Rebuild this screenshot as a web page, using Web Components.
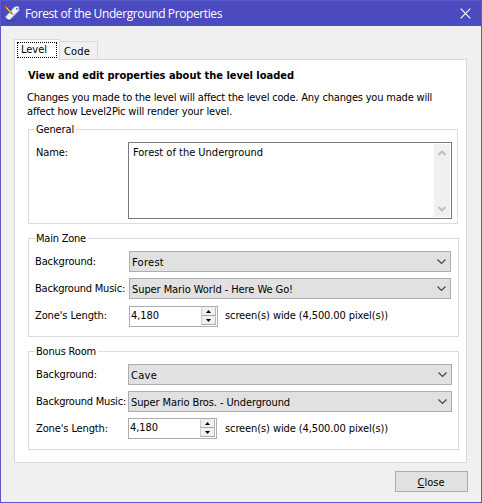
<!DOCTYPE html>
<html lang="en">
<head>
<meta charset="utf-8">
<title>Forest of the Underground Properties</title>
<style>
html, body { margin: 0; width: 482px; height: 503px; overflow: hidden; }
body { font: 11px/14px "DejaVu Sans Condensed", "DejaVu Sans", sans-serif; font-stretch: condensed; color: #000; }
</style>
</head>
<body>
<props-window></props-window>
<script>
const define = (name, html, setup) => customElements.define(name, class extends HTMLElement {
  connectedCallback() {
    if (this.shadowRoot) return;
    this.attachShadow({ mode: 'open' }).innerHTML = html;
    if (setup) setup(this, this.shadowRoot);
  }
});

/* Text whose tracking is adjusted so that it spans a given width. */
define('fit-text', `<style>:host{display:block;white-space:pre;flex:none}span{display:inline-block}</style><span><slot></slot></span>`, (el, root) => {
  const target = +el.getAttribute('w');
  const span = root.querySelector('span');
  const n = el.textContent.length;
  span.style.letterSpacing = ((target - span.getBoundingClientRect().width) / n) + 'px';
  el.style.width = target + 'px';
});

define('title-bar', `<style>
:host{display:flex;height:25px;box-sizing:border-box;background:#4b4abe;color:#fff;font:12px/25px "Open Sans","Noto Sans",sans-serif;padding-left:3px}
.app{margin:4px 5px 0 0;width:16px;height:16px}
.x{margin:7px 10px 0 auto;width:11px;height:11px}
</style>
<svg class="app" viewBox="0 0 16 16"><path d="M3 15.500H10L12 14" stroke="#34349a" fill="none"/><path d="M1.500 12L10.500 2 14.500 1.500 15 5.500 6 14.500 4 14.500Z" fill="#e9f2f4" stroke="#a9cbd8" stroke-width=".6"/><circle cx="12.800" cy="3.800" r=".9" fill="#4b4abe"/><path d="M1.500 2L7.500 8" stroke="#6b4526" stroke-width="2.400"/><path d="M1.500 2L7.500 8" stroke="#f2c63c" stroke-width="1.400"/><path d="M.5 1L2 2.500" stroke="#e73b3b" stroke-width="1.900"/><path d="M7.500 8L9 9.500" stroke="#33271f"/></svg>
<slot></slot>
<svg class="x" viewBox="0 0 11 11"><path d="M.7.700L10.300 10.300M10.300.700L.7 10.300" stroke="#fff" stroke-width="1.100"/></svg>`);

define('tab-strip', `<style>
:host{display:flex;align-items:flex-end;height:21px;margin-bottom:-1px;position:relative}
div{box-sizing:border-box;border:1px solid #d9d9d9;border-bottom:0}
.on{width:46px;height:21px;background:#fff;padding:2px 2px 1px}
.focus{border:1px dotted #000;height:16px;width:40px;padding:0 0 0 3px}
.off{width:39px;height:18px;margin:0 0 1px -1px;padding:3px 0 0 4px;background:#f0f0f0}
</style><div class="on"><div class="focus"><fit-text w="26">Level</fit-text></div></div><div class="off"><fit-text w="26">Code</fit-text></div>`);

define('group-box', `<style>
:host{display:block;box-sizing:border-box;border:1px solid #dcdcdc;flex:none}
.legend{width:max-content;height:14px;margin:-7px 0 -1px 6px;padding:0 2px 0 1px;background:#fff}
</style><div class="legend"><slot name="legend"></slot></div><slot></slot>`);

define('form-row', `<style>
:host{display:flex;align-items:flex-start}
.label{flex:none;width:var(--label-w,93px);padding-top:var(--label-y,4px)}
</style><div class="label"><slot name="label"></slot></div><slot></slot>`);

define('combo-box', `<style>
:host{display:flex;box-sizing:border-box;width:var(--combo-w,322px);height:21px;border:1px solid #adadad;background:#e1e1e1;padding:4px 4px 0 2px}
svg{margin:2px 0 0 auto;width:9px;height:7px}
</style><slot></slot><svg viewBox="0 0 9 7"><path d="M.5 1.500L4.500 5.500 8.500 1.500" fill="none" stroke="#444" stroke-width="1.100"/></svg>`);

define('spin-box', `<style>
:host{display:flex;justify-content:space-between;box-sizing:border-box;width:89px;height:21px;border:1px solid #abadb3;background:#fff;padding-left:1px}
.v{padding-top:2px}
.b{display:flex;flex-direction:column;width:15px;padding:0 1px 1px 0}
i{display:flex;align-items:center;justify-content:center;box-sizing:border-box;height:9px;background:#f0f0f0;border:1px solid;border-color:#eee #b4b4b4 #aaa #ccc}
svg{width:5px;height:3px}
</style><div class="v"><slot></slot></div><div class="b"><i><svg viewBox="0 0 5 3"><path d="M0 3L2.500 0 5 3Z"/></svg></i><i><svg viewBox="0 0 5 3"><path d="M0 0L2.500 3 5 0Z"/></svg></i></div>`);

define('memo-box', `<style>
:host{display:flex;justify-content:space-between;box-sizing:border-box;width:324px;height:77px;border:1px solid #7a7a7a;background:#fff;padding:1px}
.t{padding:2px 0 0 3px}
.bar{display:flex;flex-direction:column;justify-content:space-between;align-items:center;box-sizing:border-box;width:16px;height:73px;background:#f0f0f0;padding:6px 0 5px}
svg{width:8px;height:6px}
</style><div class="t"><slot></slot></div><div class="bar"><svg viewBox="0 0 8 6"><path d="M.5 5L4 1.500 7.500 5" fill="none" stroke="#bfbfbf" stroke-width="2"/></svg><svg viewBox="0 0 8 6"><path d="M.5 1L4 4.500 7.500 1" fill="none" stroke="#bfbfbf" stroke-width="2"/></svg></div>`);

define('push-button', `<style>
:host{display:flex;justify-content:center;box-sizing:border-box;width:73px;height:21px;border:1px solid #adadad;background:#e1e1e1;padding:4px 1px 0 0}
</style><slot></slot>`);

define('props-window', `<style>
:host{display:flex;flex-direction:column;box-sizing:border-box;width:482px;height:503px;border:1px solid #5b58c7;background:#f0f0f0}
main{display:flex;flex-direction:column;padding:13px 14px 0 13px}
.page{display:flex;flex-direction:column;box-sizing:border-box;width:453px;height:404px;border:1px solid #d9d9d9;background:#fff;padding:9px 0 0 13px}
.head{font-weight:bold}
.para{margin:8px 0 0 -1px;line-height:13px}
.para fit-text + fit-text{margin-top:1px;margin-bottom:-1px}
.general{width:430px;height:95px;margin-top:12px}
.zone{width:431px;height:99px}
.main{margin-top:14px}
.bonus{margin-top:14px;--label-w:92px;--combo-w:324px}
.general form-row{--label-w:92px;padding:6px 0 0 7px}
.rows{display:flex;flex-direction:column;gap:6px;padding:6px 0 0 7px}
.main .rows{padding-left:6px;--label-w:94px}
.units{padding:4px 0 0 7px}
.main .units{padding-top:3px}
.bonus .units{padding-left:8px}
.main form-row:last-child{margin-top:1px;--label-y:3px}
push-button{align-self:flex-end;margin:8px -1px 0 0}
u{text-underline-offset:1px;text-decoration-thickness:1px}
</style>
<title-bar><fit-text w="197">Forest of the Underground Properties</fit-text></title-bar>
<main>
<tab-strip></tab-strip>
<div class="page">
<fit-text class="head" w="266">View and edit properties about the level loaded</fit-text>
<div class="para"><fit-text w="405">Changes you made to the level will affect the level code. Any changes you made will</fit-text><fit-text w="205">affect how Level2Pic will render your level.</fit-text></div>
<group-box class="general"><fit-text slot="legend" w="38">General</fit-text>
<form-row><fit-text slot="label" w="32">Name:</fit-text><memo-box><fit-text w="130">Forest of the Underground</fit-text></memo-box></form-row></group-box>
<group-box class="zone main"><fit-text slot="legend" w="50">Main Zone</fit-text><div class="rows">
<form-row><fit-text slot="label" w="61">Background:</fit-text><combo-box><fit-text w="32">Forest</fit-text></combo-box></form-row>
<form-row><fit-text slot="label" w="90">Background Music:</fit-text><combo-box><fit-text w="161">Super Mario World - Here We Go!</fit-text></combo-box></form-row>
<form-row><fit-text slot="label" w="72">Zone's Length:</fit-text><spin-box><fit-text w="28">4,180</fit-text></spin-box><div class="units"><fit-text w="163">screen(s) wide (4,500.00 pixel(s))</fit-text></div></form-row>
</div></group-box>
<group-box class="zone bonus"><fit-text slot="legend" w="60">Bonus Room</fit-text><div class="rows">
<form-row><fit-text slot="label" w="61">Background:</fit-text><combo-box><fit-text w="26">Cave</fit-text></combo-box></form-row>
<form-row><fit-text slot="label" w="90">Background Music:</fit-text><combo-box><fit-text w="159">Super Mario Bros. - Underground</fit-text></combo-box></form-row>
<form-row><fit-text slot="label" w="72">Zone's Length:</fit-text><spin-box><fit-text w="28">4,180</fit-text></spin-box><div class="units"><fit-text w="163">screen(s) wide (4,500.00 pixel(s))</fit-text></div></form-row>
</div></group-box>
</div>
<push-button><fit-text w="27"><u>C</u>lose</fit-text></push-button>
</main>`);
</script>
</body>
</html>
